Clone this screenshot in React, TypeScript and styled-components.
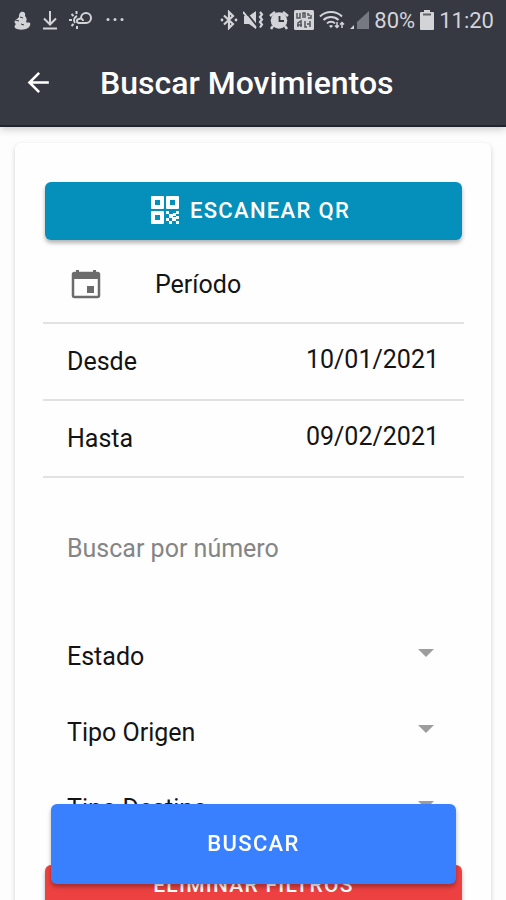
import React from "react";
import styled, { createGlobalStyle } from "styled-components";

const GlobalStyle = createGlobalStyle`
  *, *::before, *::after { box-sizing: border-box; }
  html { scrollbar-width: none; }
  body {
    margin: 0;
    background: #fdfdfd;
    color: #141414;
    font-family: Roboto, "Noto Sans", sans-serif;
    font-size: 25px;
  }
  button, input, select { font: inherit; color: inherit; }
`;

const Header = styled.header`
  position: sticky;
  top: 0;
  z-index: 2;
  background: #363842;
  color: #fff;
  border-bottom: 2px solid #23252e;
  box-shadow: 0 2px 8px rgba(0, 0, 0, 0.22);
`;

const StatusBar = styled.div`
  display: flex;
  align-items: center;
  justify-content: space-between;
  height: 40px;
  padding: 0 12px 0 13px;
  color: #d3d4d8;
  font-size: 22px;
`;

const StatusGroup = styled.div<{ $gap: number }>`
  display: flex;
  align-items: center;
  gap: ${(p) => p.$gap}px;
`;

const Toolbar = styled.div`
  display: flex;
  align-items: center;
  gap: 46px;
  height: 85px;
  padding: 0 23px;
`;

const BackButton = styled.button`
  display: flex;
  padding: 0;
  border: 0;
  background: none;
  color: #fff;
`;

const Title = styled.h1`
  margin: 0;
  font-size: 32px;
  font-weight: 500;
`;

const Card = styled.main`
  margin: 16px 15px 100px;
  padding: 39px 27px 28px 28px;
  border-radius: 6px;
  background: #fefefe;
  box-shadow: 0 2px 5px rgba(0, 0, 0, 0.18);
`;

const buttonSizes = {
  tall: { height: 80, font: 22 },
  regular: { height: 58, font: 22 },
  compact: { height: 42, font: 21 },
};

const ActionButton = styled.button<{ $color: string; $size: keyof typeof buttonSizes }>`
  display: flex;
  align-items: center;
  justify-content: center;
  gap: 11px;
  width: 100%;
  height: ${(p) => buttonSizes[p.$size].height}px;
  padding: 0 0 2px;
  border: 0;
  border-radius: 6px;
  background: ${(p) => p.$color};
  box-shadow: 0 3px 4px rgba(0, 0, 0, 0.3);
  color: #fff;
  font-size: ${(p) => buttonSizes[p.$size].font}px;
  font-weight: 500;
  letter-spacing: 0.06em;
  text-transform: uppercase;
`;

const ActionRow = styled.div`
  padding: 0 2px;
`;

const Row = styled.div`
  display: flex;
  align-items: center;
  height: 76px;
  padding: 0 24px;
`;

const LinedRow = styled(Row)`
  height: 77px;
  border-bottom: 2px solid #e2e2e2;
`;

const PeriodRow = styled(LinedRow)`
  gap: 54px;
  height: 84px;
  padding: 6px 28px 0;
`;

const PeriodTitle = styled.h2`
  margin: 0;
  font-size: 25px;
  font-weight: 400;
`;

const DateInput = styled.input`
  flex: 1;
  min-width: 0;
  padding: 0 1px 4px;
  border: 0;
  outline: 0;
  background: none;
  text-align: right;
`;

const SearchRow = styled(Row)`
  margin: 32px 0;
`;

const SearchInput = styled.input`
  width: 100%;
  padding: 0;
  border: 0;
  outline: 0;
  background: none;
  &::placeholder {
    color: #858585;
    opacity: 1;
  }
`;

const SelectRow = styled.div`
  display: grid;
  align-items: center;
  height: 76px;
  padding: 0 24px;
  > * {
    grid-area: 1 / 1;
  }
`;

const Select = styled.select`
  width: 100%;
  padding: 0;
  border: 0;
  outline: 0;
  appearance: none;
  background: none;
`;

const Caret = styled.svg`
  justify-self: end;
  margin: 0 6px 6px 0;
  pointer-events: none;
`;

const LeadingIcon = styled.svg`
  margin-left: -6px;
`;

const ClearRow = styled(ActionRow)`
  padding-top: 19px;
`;

const Footer = styled.footer`
  position: fixed;
  z-index: 1;
  right: 0;
  bottom: 16px;
  left: 0;
  padding: 0 50px 0 51px;
`;

const filters = ["Estado", "Tipo Origen", "Tipo Destino"];

function NotificationIcons() {
  return (
    <StatusGroup $gap={11}>
      <svg width="18" height="20" viewBox="0 0 18 20" fill="currentColor" aria-hidden="true">
        <path d="M8 2c3-1 5 1 4 4 2 2 2 4 1 6 1 1 3 0 4 1 1 2-1 5-4 6-4 1-8 1-11-1-1-2 0-3 1-4-2-1-2-4 1-5l2-2c0-2 0-4 2-5z" />
        <path d="M2 10l4 1M7 7l3 1M8 14l3 1" stroke="#363842" strokeWidth="1" />
      </svg>
      <svg width="16" height="20" viewBox="0 0 16 20" fill="none" stroke="currentColor" strokeWidth="2" aria-hidden="true">
        <path d="M8 1v13M2 8.500l6 6 6-6M1 18.500h14" />
      </svg>
      <svg width="24" height="20" viewBox="0 0 24 20" fill="none" stroke="currentColor" strokeWidth="2" aria-hidden="true">
        <path d="M10 13h7a5 5 0 1 0-5-5M10 13a2 2 0 0 1 0-4c2-1 4 0 4 2" />
        <path d="M8 6a4.500 4.500 0 0 0-2 7" />
        <path d="M7.500 1v3M2.500 4l2 2M0 10h3M2.500 16l2-2M8 16v3" />
      </svg>
      <svg width="22" height="20" viewBox="0 0 22 20" fill="currentColor" aria-hidden="true">
        <circle cx="4" cy="9.500" r="1.500" />
        <circle cx="11" cy="9.500" r="1.500" />
        <circle cx="18" cy="9.500" r="1.500" />
      </svg>
    </StatusGroup>
  );
}

function SystemIcons() {
  return (
    <StatusGroup $gap={5}>
      <svg width="18" height="20" viewBox="0 0 18 20" fill="none" stroke="currentColor" strokeWidth="2.200" aria-hidden="true">
        <path d="M4 5.500l9 8.500-4 4V2l4 4-9 8.500" />
        <circle cx="2" cy="10" r="1.400" fill="currentColor" stroke="none" />
        <circle cx="16" cy="10" r="1.400" fill="currentColor" stroke="none" />
      </svg>
      <svg width="21" height="20" viewBox="0 0 21 20" fill="currentColor" aria-hidden="true">
        <path d="M1 6h5l7-5v18l-7-5H1z" />
        <path d="M2 1l12 15" stroke="#363842" strokeWidth="1.800" />
        <path d="M0 2l13 16" stroke="currentColor" strokeWidth="2" />
        <path d="M17 2l2 2.500-2 2.500 2 2.500-2 2.500 2 2.500-2 3" fill="none" stroke="currentColor" strokeWidth="2.200" />
      </svg>
      <svg width="20" height="20" viewBox="0 0 20 20" fill="currentColor" aria-hidden="true">
        <circle cx="10" cy="10.500" r="8.300" />
        <path d="M1 6l5-4M19 6l-5-4M4 16l-2 3M16 16l2 3" stroke="currentColor" strokeWidth="2.500" />
        <path d="M10.500 6v5H15" fill="none" stroke="#363842" strokeWidth="1.800" />
      </svg>
      <svg width="20" height="20" viewBox="0 0 20 20" aria-hidden="true">
        <rect width="20" height="20" rx="1.500" fill="currentColor" />
        <path d="M3 3v5h3V3M9 8V3h2v5M14 3v2h2M14 8h3V5M4 17v-4l3-2v6M3 15h5M11 11v6h2M16 11v3h-3M16 14v3" fill="none" stroke="#53555e" strokeWidth="1.500" />
      </svg>
      <svg width="26" height="20" viewBox="0 0 26 20" fill="none" stroke="currentColor" strokeWidth="2" aria-hidden="true">
        <path d="M1 6.500c6-6 16-6 22 0M4.500 10c4-4 11-4 15 0M8 13.500c2-2.500 6-2.500 8 0" />
        <path d="M12 18l-2-2q2-2 4 0z" fill="currentColor" stroke="none" />
        <path d="M18 12v6M16 15.500l2 2 2-2M23 18v-6M21 14.500l2-2 2 2" strokeWidth="1.500" />
      </svg>
      <svg width="19" height="20" viewBox="0 0 19 20" aria-hidden="true">
        <path d="M19 1v18H7v-7z" fill="#777982" />
        <path d="M4 15v4H0z" fill="currentColor" />
      </svg>
      <span>80%</span>
      <svg width="14" height="20" viewBox="0 0 14 20" fill="currentColor" aria-hidden="true">
        <path d="M4 0h6v2h3q1 0 1 1v16q0 1-1 1H1q-1 0-1-1V3q0-1 1-1h3z" />
        <path d="M3 4.500h8" stroke="#60626b" strokeWidth="2" />
      </svg>
      <span>11:20</span>
    </StatusGroup>
  );
}

function BackIcon() {
  return (
    <svg width="31" height="31" viewBox="0 0 24 24" fill="none" stroke="currentColor" strokeWidth="2" aria-hidden="true">
      <path d="M20 12H5.500M12.500 4.500L5 12l7.500 7.500" />
    </svg>
  );
}

function QrIcon() {
  return (
    <LeadingIcon width="28" height="28" viewBox="0 0 28 28" fill="currentColor" aria-hidden="true">
      <path
        fillRule="evenodd"
        d="M1 0h11q1 0 1 1v11q0 1-1 1H1q-1 0-1-1V1q0-1 1-1zM4 4v5h5V4zM16 0h11q1 0 1 1v11q0 1-1 1H16q-1 0-1-1V1q0-1 1-1zM19 4v5h5V4zM1 15h11q1 0 1 1v11q0 1-1 1H1q-1 0-1-1V16q0-1 1-1zM4 19v5h5v-5z"
      />
      <path d="M15 15h3v3h-3zM25 15h3v3h-3zM22 17h3v3h-3zM18 18h4v4h-4zM21 21h4v4h-4zM25 20h3v3h-3zM15 22h3v3h-3zM18 25h3v3h-3zM25 25h3v3h-3z" />
    </LeadingIcon>
  );
}

function CalendarIcon() {
  return (
    <svg width="30" height="30" viewBox="0 0 30 30" aria-hidden="true">
      <rect x="2" y="4" width="26" height="24" rx="1.500" fill="none" stroke="#6b6b6b" strokeWidth="2.500" />
      <path d="M2 4h26v6H2zM5 1h3v4H5zM22 1h3v4h-3zM16 17h7v7h-7z" fill="#6b6b6b" />
    </svg>
  );
}

function FilterSelect({ label }: { label: string }) {
  return (
    <SelectRow>
      <Select aria-label={label} defaultValue="">
        <option value="">{label}</option>
      </Select>
      <Caret width="16" height="8" viewBox="0 0 16 8" aria-hidden="true">
        <path d="M0 0h16L8 8z" fill="#9d9d9d" />
      </Caret>
    </SelectRow>
  );
}

export default function App() {
  return (
    <>
      <GlobalStyle />
      <Header>
        <StatusBar>
          <NotificationIcons />
          <SystemIcons />
        </StatusBar>
        <Toolbar>
          <BackButton type="button" aria-label="Volver">
            <BackIcon />
          </BackButton>
          <Title>Buscar Movimientos</Title>
        </Toolbar>
      </Header>
      <Card>
        <ActionRow>
          <ActionButton type="button" $color="#0490ba" $size="regular">
            <QrIcon />
            Escanear QR
          </ActionButton>
        </ActionRow>
        <PeriodRow>
          <CalendarIcon />
          <PeriodTitle>Período</PeriodTitle>
        </PeriodRow>
        <LinedRow>
          <label htmlFor="desde">Desde</label>
          <DateInput id="desde" type="text" defaultValue="10/01/2021" />
        </LinedRow>
        <LinedRow>
          <label htmlFor="hasta">Hasta</label>
          <DateInput id="hasta" type="text" defaultValue="09/02/2021" />
        </LinedRow>
        <SearchRow>
          <SearchInput type="text" aria-label="Buscar por número" placeholder="Buscar por número" />
        </SearchRow>
        {filters.map((label) => (
          <FilterSelect key={label} label={label} />
        ))}
        <ClearRow>
          <ActionButton type="button" $color="#ed4040" $size="compact">
            Eliminar filtros
          </ActionButton>
        </ClearRow>
      </Card>
      <Footer>
        <ActionButton type="button" $color="#3880ff" $size="tall">
          Buscar
        </ActionButton>
      </Footer>
    </>
  );
}
